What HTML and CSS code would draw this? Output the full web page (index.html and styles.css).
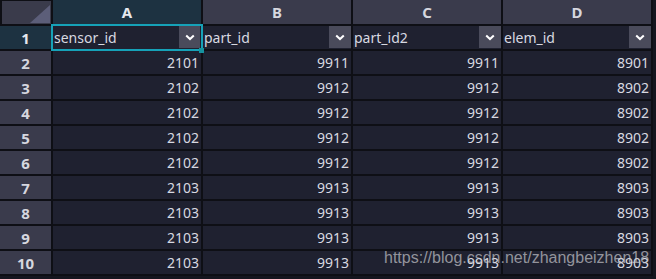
FILE: index.html
```html
<!DOCTYPE html>
<html>
<head>
<meta charset="utf-8">
<link rel="stylesheet" href="styles.css">
</head>
<body>
<div class="sheet">
  <div class="grid">
    <div class="corner"><span class="tri"></span></div>
    <div class="colhead sel">A</div>
    <div class="colhead">B</div>
    <div class="colhead">C</div>
    <div class="colhead">D</div>

    <div class="rowhead sel">1</div>
    <div class="cell hdr active"><span class="lbl">sensor_id</span><span class="dd"><svg width="10" height="7" viewBox="0 0 10 7"><path d="M1.2 1.4 L5 5 L8.8 1.4" fill="none" stroke="#fff" stroke-width="2"/></svg></span></div>
    <div class="cell hdr"><span class="lbl">part_id</span><span class="dd"><svg width="10" height="7" viewBox="0 0 10 7"><path d="M1.2 1.4 L5 5 L8.8 1.4" fill="none" stroke="#fff" stroke-width="2"/></svg></span></div>
    <div class="cell hdr"><span class="lbl">part_id2</span><span class="dd"><svg width="10" height="7" viewBox="0 0 10 7"><path d="M1.2 1.4 L5 5 L8.8 1.4" fill="none" stroke="#fff" stroke-width="2"/></svg></span></div>
    <div class="cell hdr"><span class="lbl">elem_id</span><span class="dd"><svg width="10" height="7" viewBox="0 0 10 7"><path d="M1.2 1.4 L5 5 L8.8 1.4" fill="none" stroke="#fff" stroke-width="2"/></svg></span></div>

    <div class="rowhead">2</div><div class="cell num">2101</div><div class="cell num">9911</div><div class="cell num">9911</div><div class="cell num">8901</div>
    <div class="rowhead">3</div><div class="cell num">2102</div><div class="cell num">9912</div><div class="cell num">9912</div><div class="cell num">8902</div>
    <div class="rowhead">4</div><div class="cell num">2102</div><div class="cell num">9912</div><div class="cell num">9912</div><div class="cell num">8902</div>
    <div class="rowhead">5</div><div class="cell num">2102</div><div class="cell num">9912</div><div class="cell num">9912</div><div class="cell num">8902</div>
    <div class="rowhead">6</div><div class="cell num">2102</div><div class="cell num">9912</div><div class="cell num">9912</div><div class="cell num">8902</div>
    <div class="rowhead">7</div><div class="cell num">2103</div><div class="cell num">9913</div><div class="cell num">9913</div><div class="cell num">8903</div>
    <div class="rowhead">8</div><div class="cell num">2103</div><div class="cell num">9913</div><div class="cell num">9913</div><div class="cell num">8903</div>
    <div class="rowhead">9</div><div class="cell num">2103</div><div class="cell num">9913</div><div class="cell num">9913</div><div class="cell num">8903</div>
    <div class="rowhead">10</div><div class="cell num">2103</div><div class="cell num">9913</div><div class="cell num">9913</div><div class="cell num">8903</div>
  </div>
  <div class="watermark">https://blog.csdn.net/zhangbeizhen18</div>
</div>
</body>
</html>
```
FILE: styles.css
```css
html, body {
  margin: 0;
  padding: 0;
  background: #15161f;
  overflow: hidden;
}
.sheet {
  position: relative;
  width: 656px;
  height: 279px;
  overflow: hidden;
  background: #15161f;
  font-family: "Noto Sans", "Open Sans", sans-serif;
}
.grid {
  display: grid;
  grid-template-columns: 51px repeat(4, 148px);
  grid-template-rows: 24px repeat(10, 23px);
  gap: 2px;
  background: #0e0f15;
  width: 653px;
  padding-bottom: 2px;
}
.corner {
  background: #3a3b4b;
  position: relative;
  margin: 1px 0 0 2px;
}
.tri {
  position: absolute;
  right: 1px;
  bottom: 1px;
  width: 20px;
  height: 18px;
  background: #5c5e79;
  clip-path: polygon(100% 0, 100% 100%, 0 100%);
}
.colhead {
  background: #3a3b4c;
  color: #d6d7df;
  font-weight: bold;
  font-size: 15px;
  display: flex;
  align-items: center;
  justify-content: center;
}
.colhead.sel {
  background: #1d3241;
  color: #e6e8ee;
}
.rowhead {
  background: #3a3b4c;
  color: #d6d7df;
  font-weight: bold;
  font-size: 15px;
  display: flex;
  align-items: center;
  justify-content: center;
}
.rowhead.sel {
  background: #1d3241;
  color: #e6e8ee;
}
.cell {
  background: #1f2130;
  color: #d8d9e1;
  font-size: 14px;
  display: flex;
  align-items: center;
  position: relative;
}
.num {
  justify-content: flex-end;
  padding-right: 2px;
}
.hdr {
  justify-content: space-between;
  padding-left: 1px;
}
.lbl {
  line-height: 23px;
}
.dd {
  width: 22px;
  height: 22px;
  background: #4a4b5b;
  display: flex;
  align-items: center;
  justify-content: center;
  align-self: flex-start;
}
.active .dd {
  width: 21px;
  margin-right: 1px;
}
.active::after {
  content: "";
  position: absolute;
  left: -2px;
  top: -2px;
  right: -2px;
  bottom: -2px;
  border: 2px solid #16a2b8;
  pointer-events: none;
}
.active::before {
  content: "";
  position: absolute;
  right: -3px;
  bottom: -4px;
  width: 5px;
  height: 5px;
  background: #16929f;
  z-index: 2;
}
.watermark {
  position: absolute;
  left: 384px;
  top: 249px;
  font-family: "Liberation Sans", Arial, sans-serif;
  font-size: 16px;
  color: rgba(200, 200, 205, 0.7);
  white-space: nowrap;
}
```
